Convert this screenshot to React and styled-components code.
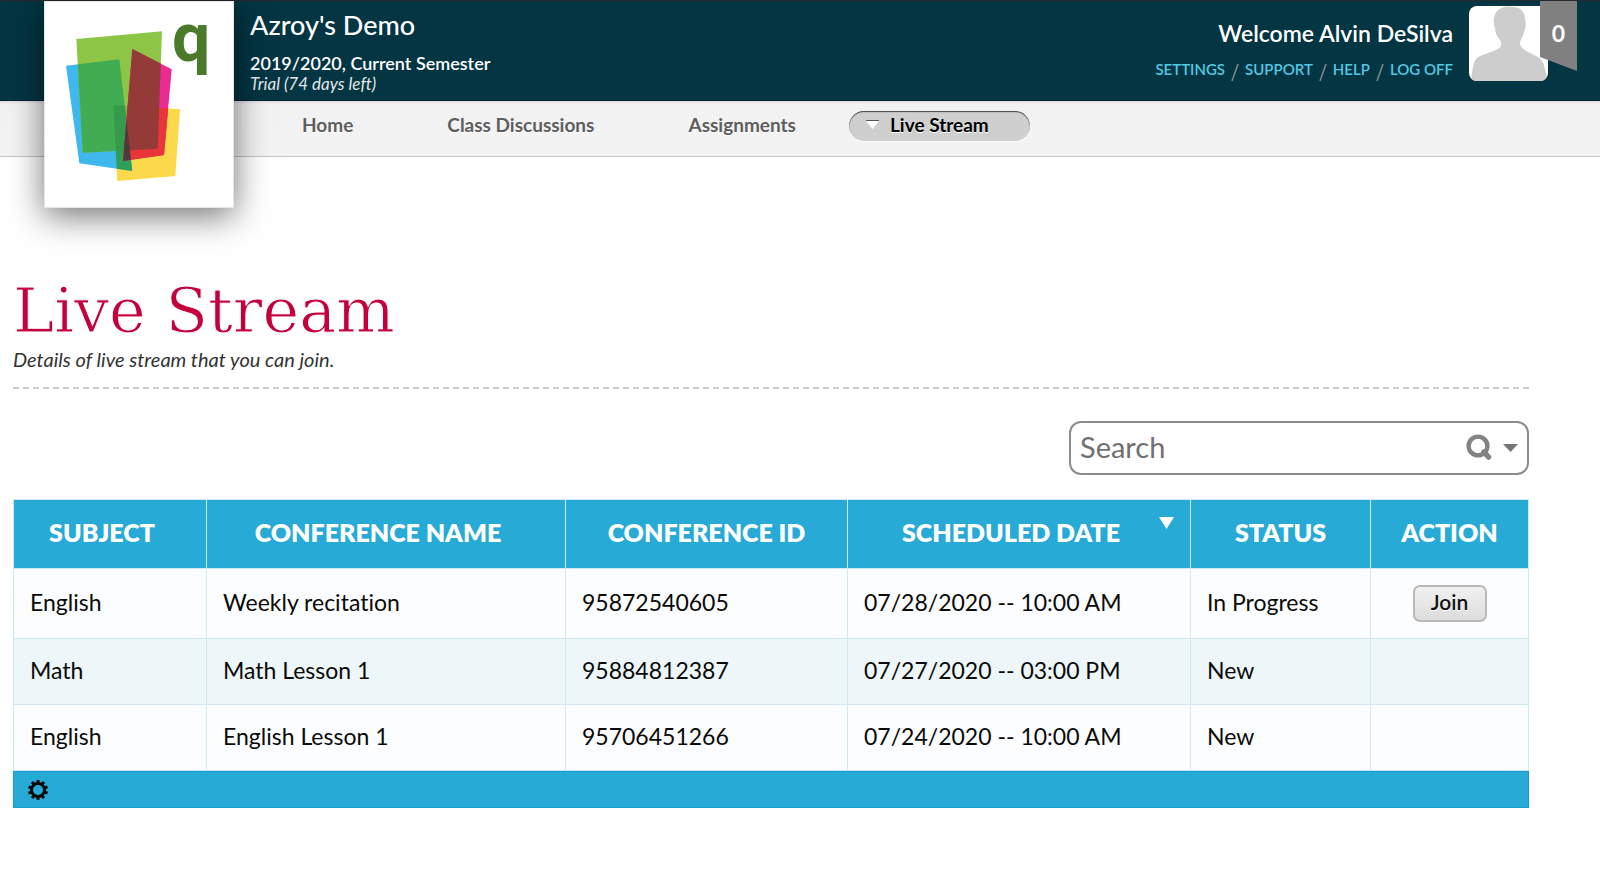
import React from "react"
import styled, { createGlobalStyle } from "styled-components"

const GlobalStyle = createGlobalStyle`
  * {
    box-sizing: border-box;
  }

  body {
    margin: 0;
    background: #fff;
    color: #111;
    font-family: Lato, "Open Sans", sans-serif;
    font-variant-ligatures: none;
  }
`

const Header = styled.header`
  display: flex;
  height: 101px;
  padding-left: 44px;
  padding-right: 23px;
  border-top: 1px solid #29282c;
  border-bottom: 1px solid #01253a;
  background: #033543;
  color: #fff;
`

const LogoBox = styled.a`
  position: relative;
  z-index: 1;
  flex: none;
  width: 190px;
  height: 207px;
  border: 1px solid #e6e6e6;
  background: #fff;
  box-shadow: 0 8px 32px rgba(0, 0, 0, .55);

  svg {
    display: block;
    width: 100%;
    height: 100%;
    overflow: visible;
  }
`

const School = styled.div`
  flex: 1;
  padding: 6px 0 0 16px;
`

const SchoolName = styled.div`
  font-size: 27px;
  font-weight: 500;
  line-height: 36px;
`

const Semester = styled.div`
  font-size: 18px;
  font-weight: 600;
  line-height: 24px;
  padding-top: 8px;
`

const Trial = styled.div`
  color: #e3e8ea;
  font-size: 17px;
  font-style: italic;
  line-height: 18px;
`

const User = styled.div`
  padding: 16px 16px 0 0;
  text-align: right;
`

const Welcome = styled.div`
  font-size: 23px;
  font-weight: 600;
  line-height: 32px;
`

const UserLinks = styled.div`
  display: flex;
  justify-content: flex-end;
  gap: 6px;
  padding-top: 8px;
  line-height: 24px;
`

const UserLink = styled.a`
  color: #54c8e2;
  font-size: 15px;
  font-weight: 600;
  text-decoration: none;
  text-transform: uppercase;
`

const Slash = styled.svg`
  width: 8px;
  height: 19px;
  margin-top: 6px;
`

const Profile = styled.div`
  position: relative;
  width: 108px;
`

const Avatar = styled.svg`
  display: block;
  width: 79px;
  height: 75px;
  margin-top: 5px;
  border-radius: 8px;
  background: #fff;
`

const Ribbon = styled.button`
  position: absolute;
  top: 0;
  right: 0;
  width: 37px;
  height: 70px;
  padding: 0 0 6px;
  border: 0;
  background: #808080;
  clip-path: polygon(0 0, 100% 0, 100% 100%, 0 80%);
  color: #fff;
  font-family: inherit;
  font-size: 23px;
  font-weight: 700;
`

const Nav = styled.nav`
  display: flex;
  gap: 12px;
  height: 56px;
  padding: 10px 0 0 261px;
  border-bottom: 1px solid #c4c4c4;
  background: linear-gradient(#dcdcdc, #f2f2f2 3px, #f3f3f3);
`

const NavLink = styled.a`
  position: relative;
  height: 30px;
  padding: 0 41px;
  border-radius: 15px;
  background: ${props => props.$active ? "#cfcfcf" : "none"};
  box-shadow: ${props => props.$active ? "inset 0 1px 1px #444, 0 1px 1px #fff" : "none"};
  color: ${props => props.$active ? "#000" : "#5e5e5e"};
  font-size: 19px;
  font-weight: 700;
  line-height: 28px;
  text-decoration: none;
  text-shadow: 0 1px 0 #fff;
`

const NavArrow = styled.svg`
  position: absolute;
  top: 9px;
  left: 17px;
  width: 13px;
  height: 10px;
`

const Main = styled.main`
  padding: 118px 71px 0 13px;
`

const Title = styled.h1`
  margin: 0;
  color: #c4003c;
  font-family: "DejaVu Serif", serif;
  font-size: 62px;
  font-weight: 400;
  line-height: 72px;
  -webkit-text-stroke: 1px #fff;
`

const Subtitle = styled.p`
  margin: 0;
  padding: 0 0 16px;
  border-bottom: 2px dashed #ccc;
  color: #333;
  font-size: 20px;
  font-style: italic;
  line-height: 24px;
`

const SearchBox = styled.form`
  display: flex;
  align-items: center;
  width: 460px;
  height: 54px;
  margin: 32px 0 24px auto;
  padding: 0 9px;
  border: 2px solid #8c8c8c;
  border-radius: 12px;
`

const SearchInput = styled.input`
  flex: 1;
  min-width: 0;
  padding: 0 0 4px;
  border: 0;
  outline: 0;
  background: none;
  font-family: inherit;
  font-size: 29px;

  &::placeholder {
    color: #707070;
    opacity: 1;
  }
`

const IconButton = styled.button`
  display: flex;
  padding: 0;
  border: 0;
  background: none;
`

const SearchTools = styled.div`
  display: flex;
  align-items: center;
  gap: 11px;
`

const Table = styled.table`
  width: 100%;
  border-collapse: collapse;
  table-layout: fixed;
`

const Th = styled.th`
  height: 69px;
  padding: 0 16px 4px;
  border: 1px solid #cdeaf4;
  background: #28aad6;
  color: #fff;
  font-size: 25px;
  font-weight: 800;
  text-transform: uppercase;
  white-space: nowrap;
`

const HeadCell = styled.div`
  position: relative;
  padding-right: ${props => props.$sortable ? "16px" : "0"};
`

const SortArrow = styled.svg`
  position: absolute;
  top: 0;
  right: 0;
  width: 15px;
  height: 12px;
`

const Row = styled.tr`
  height: ${props => props.$tall ? "70px" : "66px"};
  background: #fcfdfe;

  &:nth-child(even) {
    background: #edf6f9;
  }
`

const Td = styled.td`
  padding: 0 16px 4px;
  border: 1px solid #cfe8f2;
  color: #0a0a0a;
  font-size: 23px;
  text-align: ${props => props.$center ? "center" : "left"};
  white-space: nowrap;
`

const JoinButton = styled.button`
  width: 74px;
  height: 37px;
  margin-top: 4px;
  padding: 0 0 4px;
  border: 2px solid #b9b9b9;
  border-radius: 7px;
  background: linear-gradient(#f1f1f1, #dcdcdc);
  color: #111;
  font-family: inherit;
  font-size: 21px;
  font-weight: 600;
  text-shadow: 0 1px 0 #fff;
  vertical-align: middle;
`

const TableFooter = styled.div`
  display: flex;
  align-items: center;
  height: 37px;
  padding-left: 14px;
  border: 1px solid #139fce;
  background: #28aad6;
`

const columns = [
  { title: "Subject", width: 193, sortable: true },
  { title: "Conference Name", width: 359, sortable: true },
  { title: "Conference ID", width: 282 },
  { title: "Scheduled Date", width: 343, sortable: true, sorted: true },
  { title: "Status", width: 180 },
  { title: "Action", width: 158 },
]

const total = columns.reduce((sum, column) => sum + column.width, 0)

const conferences = [
  { subject: "English", name: "Weekly recitation", id: "95872540605", date: "07/28/2020 -- 10:00 AM", status: "In Progress", join: true },
  { subject: "Math", name: "Math Lesson 1", id: "95884812387", date: "07/27/2020 -- 03:00 PM", status: "New" },
  { subject: "English", name: "English Lesson 1", id: "95706451266", date: "07/24/2020 -- 10:00 AM", status: "New" },
]

const green = "94,111 351,88 338,440 113,452"
const blue = "63,191 223,172 262,507 103,484"
const pink = "262,141 380,202 357,459 234,477"
const yellow = "205,309 405,322 391,522 217,537"

const Logo = () =>
  <svg viewBox="0 0 564 615" aria-hidden="true">
    <defs>
      <clipPath id="green"><polygon points={green} /></clipPath>
      <clipPath id="blue"><polygon points={blue} /></clipPath>
      <clipPath id="yellow"><polygon points={yellow} /></clipPath>
    </defs>
    <polygon points={yellow} fill="#fbd94b" />
    <polygon points={blue} fill="#3fb8ee" />
    <polygon points={green} fill="#8dc647" />
    <polygon points={yellow} fill="#83b63f" clipPath="url(#green)" />
    <polygon points={yellow} fill="#2f9f57" clipPath="url(#blue)" />
    <polygon points={green} fill="#41ac52" clipPath="url(#blue)" />
    <g clipPath="url(#green)">
      <polygon points={yellow} fill="#369a4c" clipPath="url(#blue)" />
    </g>
    <polygon points={pink} fill="#ea2c92" />
    <polygon points={pink} fill="#e93539" clipPath="url(#yellow)" />
    <polygon points={pink} fill="#943a37" clipPath="url(#green)" />
    <g clipPath="url(#blue)">
      <polygon points={pink} fill="#4c3a3c" />
    </g>
    <text x="381" y="178" fill="#4b7a2b" fontFamily="Roboto" fontWeight="700" fontSize="204">q</text>
  </svg>

const links = ["Settings", "Support", "Help", "Log off"]

const PageHeader = () =>
  <Header>
    <LogoBox href="#" aria-label="School home"><Logo /></LogoBox>
    <School>
      <SchoolName>Azroy's Demo</SchoolName>
      <Semester>2019/2020, Current Semester</Semester>
      <Trial>Trial (74 days left)</Trial>
    </School>
    <User>
      <Welcome>Welcome Alvin DeSilva</Welcome>
      <UserLinks>
        {
          links.map((link, index) =>
            <React.Fragment key={link}>
              {index > 0 && <Slash viewBox="0 0 8 19"><path d="M7 1L1 18" stroke="#7d8586" strokeWidth="1.6" /></Slash>}
              <UserLink href="#">{link}</UserLink>
            </React.Fragment>
          )
        }
      </UserLinks>
    </User>
    <Profile>
      <Avatar viewBox="0 0 79 75" aria-hidden="true">
        <path fill="#cdcdcd" d="M2 75C3 66 4 57 7 53C11 48 23 47 29 43C33 40 33 37 31 34C28 30 26 27 26 22C24 17 24 9 29 4C34 0 39 0 43 1C50 1 55 4 56 12C57 17 57 22 55 26C54 31 51 34 51 38C52 44 62 47 69 51C75 54 77 65 78 75Z" />
      </Avatar>
      <Ribbon aria-label="Notifications">0</Ribbon>
    </Profile>
  </Header>

const SearchForm = () =>
  <SearchBox onSubmit={event => event.preventDefault()}>
    <SearchInput type="text" placeholder="Search" aria-label="Search" />
    <SearchTools>
      <IconButton type="submit" aria-label="Run search">
        <svg width="27" height="28" viewBox="0 0 27 28">
          <circle cx="13" cy="12" r="9.4" fill="none" stroke="#838383" strokeWidth="4.4" />
          <path d="M19 18L23.500 23" stroke="#838383" strokeWidth="5.500" strokeLinecap="round" />
        </svg>
      </IconButton>
      <IconButton type="button" aria-label="Search options">
        <svg width="15" height="8" viewBox="0 0 15 8"><path d="M0 0H15L7.5 8Z" fill="#757575" /></svg>
      </IconButton>
    </SearchTools>
  </SearchBox>

const ConferenceTable = () =>
  <Table>
    <colgroup>
      {columns.map(column => <col key={column.title} style={{width: `${column.width / total * 100}%`}} />)}
    </colgroup>
    <thead>
      <tr>
        {
          columns.map(column =>
            <Th key={column.title} scope="col">
              <HeadCell $sortable={column.sortable}>
                {column.title}
                {column.sorted && <SortArrow viewBox="0 0 15 12"><path d="M0 0H15L7.5 12Z" fill="#fff" /></SortArrow>}
              </HeadCell>
            </Th>
          )
        }
      </tr>
    </thead>
    <tbody>
      {
        conferences.map(conference =>
          <Row key={conference.id} $tall={conference.join}>
            <Td>{conference.subject}</Td>
            <Td>{conference.name}</Td>
            <Td>{conference.id}</Td>
            <Td>{conference.date}</Td>
            <Td>{conference.status}</Td>
            <Td $center>{conference.join && <JoinButton>Join</JoinButton>}</Td>
          </Row>
        )
      }
    </tbody>
  </Table>

const teeth = [0, 36, 72, 108, 144, 180, 216, 252, 288, 324]

const Gear = () =>
  <svg width="20" height="20" viewBox="0 0 20 20">
    <circle cx="10" cy="10" r="6.500" fill="none" stroke="#0a0a0a" strokeWidth="3" />
    {teeth.map(angle => <path key={angle} d="M8.500 0H11.500V3H8.500Z" fill="#0a0a0a" transform={`rotate(${angle} 10 10)`} />)}
  </svg>

const App = () =>
  <>
    <GlobalStyle />
    <PageHeader />
    <Nav>
      <NavLink href="#">Home</NavLink>
      <NavLink href="#">Class Discussions</NavLink>
      <NavLink href="#">Assignments</NavLink>
      <NavLink href="#" $active aria-current="page">
        <NavArrow viewBox="0 0 13 10"><path d="M0 1H13L6.500 9Z" fill="#fff" /><path d="M0 .5H13" stroke="#555" /></NavArrow>
        Live Stream
      </NavLink>
    </Nav>
    <Main>
      <Title>Live Stream</Title>
      <Subtitle>Details of live stream that you can join.</Subtitle>
      <SearchForm />
      <ConferenceTable />
      <TableFooter>
        <IconButton type="button" aria-label="Table settings"><Gear /></IconButton>
      </TableFooter>
    </Main>
  </>

export default App
